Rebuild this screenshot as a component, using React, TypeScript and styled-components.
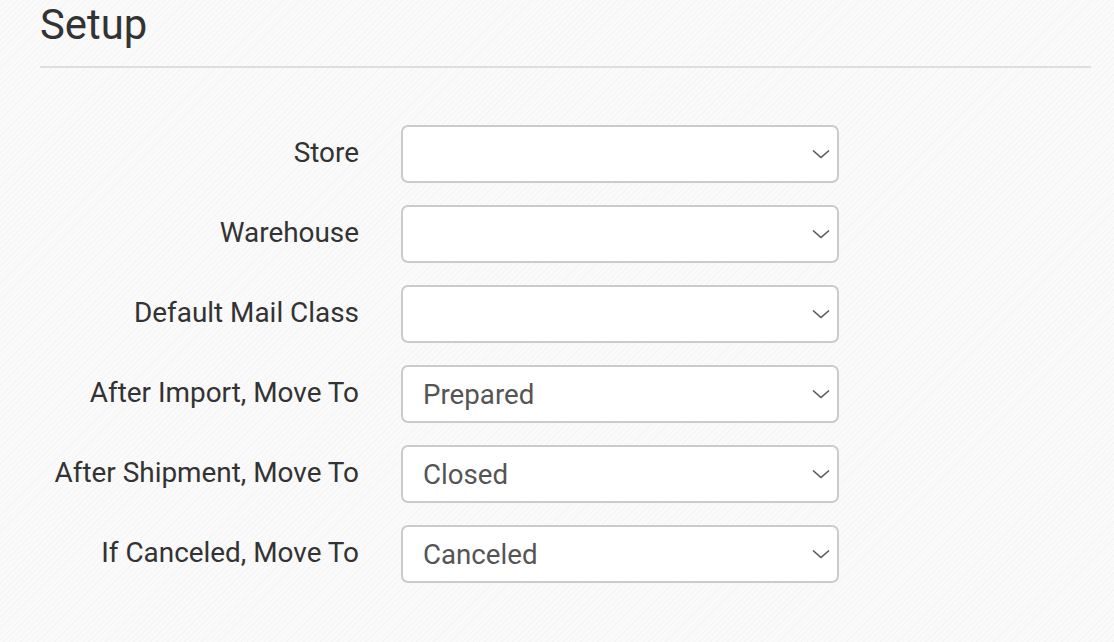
import React from 'react';
import styled, { createGlobalStyle } from 'styled-components';

const GlobalStyle = createGlobalStyle`
  html, body {
    margin: 0;
    padding: 0;
  }
  body {
    font-family: Roboto, "Liberation Sans", sans-serif;
    background-color: #fafafa;
    background-image: repeating-linear-gradient(
      135deg,
      rgba(0, 0, 0, 0.018) 0px,
      rgba(0, 0, 0, 0.018) 1px,
      transparent 1px,
      transparent 4px
    );
    min-height: 642px;
  }
`;

const Page = styled.div`
  padding: 0 23px 0 40px;
`;

const Title = styled.h1`
  margin: 0;
  padding-top: 2px;
  font-size: 41.8px;
  font-weight: 400;
  line-height: 46px;
  color: #333;
`;

const Rule = styled.hr`
  margin: 18px 0 0;
  border: 0;
  height: 2px;
  background: #dedede;
`;

const Form = styled.div`
  display: flex;
  flex-direction: column;
  gap: 22px;
  padding-top: 57px;
`;

const Row = styled.div`
  display: grid;
  grid-template-columns: 319px 438px;
  column-gap: 42px;
  align-items: center;
`;

const Label = styled.label`
  text-align: right;
  font-size: 27.9px;
  line-height: 32px;
  margin-top: -2px;
  white-space: nowrap;
  color: #333;
`;

const SelectBox = styled.div`
  position: relative;
  box-sizing: border-box;
  height: 58px;
  border: 2px solid #cbcbcb;
  border-radius: 7px;
  background: #fff;
  display: flex;
  align-items: center;
  padding: 0 50px 0 20px;
  font-size: 27.7px;
  color: #555;
`;

const Chevron = styled.svg`
  position: absolute;
  right: 7px;
  top: 50%;
  margin-top: -5px;
`;

interface IField {
  label: string
  value?: string
}

const fields: IField[] = [
  { label: 'Store' },
  { label: 'Warehouse' },
  { label: 'Default Mail Class' },
  { label: 'After Import, Move To', value: 'Prepared' },
  { label: 'After Shipment, Move To', value: 'Closed' },
  { label: 'If Canceled, Move To', value: 'Canceled' },
];

const Select: React.FC<{ value?: string }> = ({ value }) => (
  <SelectBox>
    {value}
    <Chevron width="18" height="10" viewBox="0 0 18 10" fill="none">
      <path d="M1 1.5 L9 8.5 L17 1.5" stroke="#555" strokeWidth="1.6" />
    </Chevron>
  </SelectBox>
);

const App: React.FC = () => (
  <Page>
    <GlobalStyle />
    <Title>Setup</Title>
    <Rule />
    <Form>
      {fields.map((f) => (
        <Row key={f.label}>
          <Label>{f.label}</Label>
          <Select value={f.value} />
        </Row>
      ))}
    </Form>
  </Page>
);

export default App;
